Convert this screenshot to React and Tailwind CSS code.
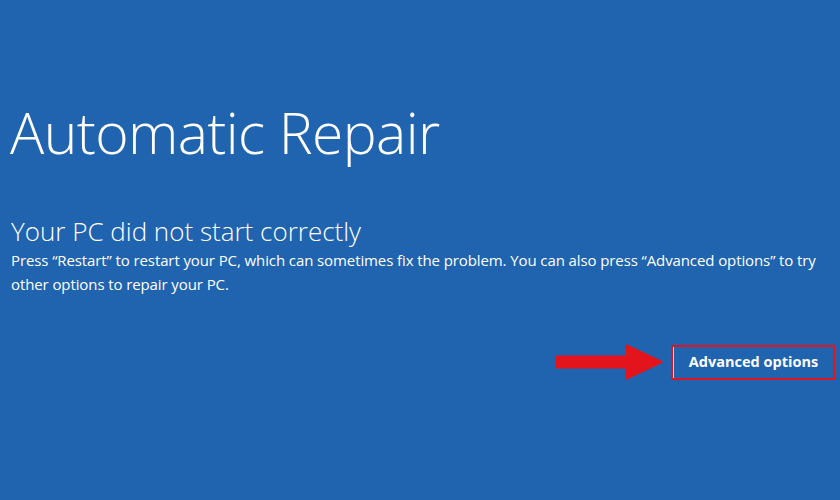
import React from 'react';

const Arrow = () => (
    <svg width="110" height="38" viewBox="0 0 110 38" className="shrink-0">
        <path d="M2 14 H72 V3 L106 19 L72 35 V24 H2 Z" fill="#e3141b" stroke="#e3141b" strokeWidth="3" strokeLinejoin="round" />
    </svg>
);

const App = () => {
    return (
        <div className="w-[840px] h-[500px] bg-[#2063af] text-white overflow-hidden font-['Open_Sans','Noto_Sans',sans-serif]">
            <div className="pt-[96px] pl-[10px]">
                <h1 className="text-[57px] font-light leading-[72px] tracking-[-0.6px]">Automatic Repair</h1>
            </div>
            <div className="pt-[46px] pl-[11px]">
                <h2 className="text-[26px] font-light leading-[34px]">Your PC did not start correctly</h2>
                <p className="text-[15px] leading-[24px] pr-[20px] tracking-[-0.1px]">
                    Press “Restart” to restart your PC, which can sometimes fix the problem. You can also press “Advanced options” to try other options to repair your PC.
                </p>
            </div>
            <div className="flex justify-end items-center gap-[6px] pr-[5px] mt-[47px]">
                <Arrow />
                <button className="w-[164px] h-[35px] border-2 border-[#e3141b] flex items-center justify-center">
                    <span className="h-full w-full border-l border-white/80 flex items-center justify-center text-[14.5px] font-bold">
                        Advanced options
                    </span>
                </button>
            </div>
        </div>
    );
};

export default App;
